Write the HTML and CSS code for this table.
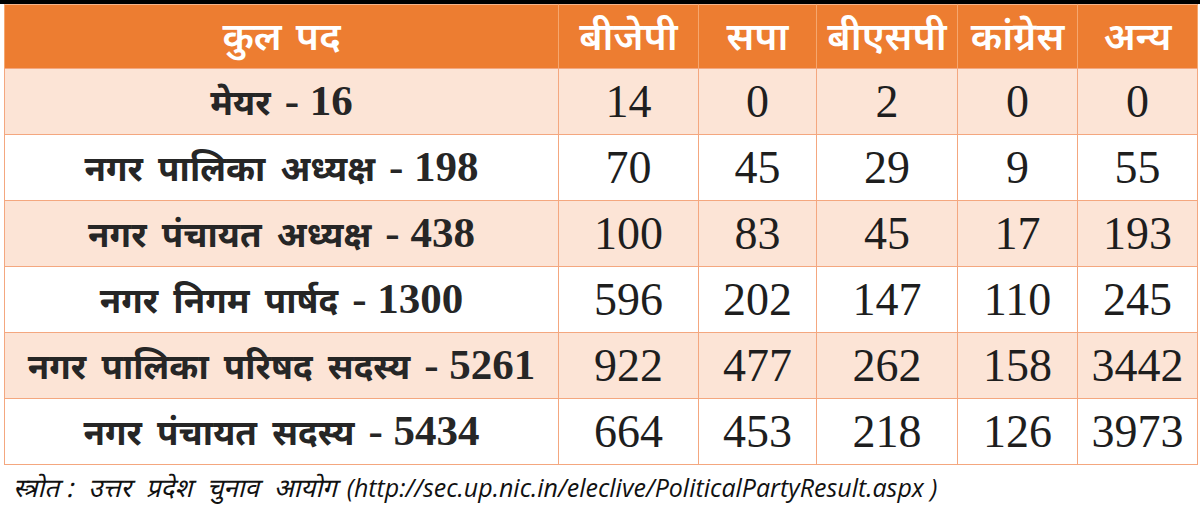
FILE: index.html
```html
<!DOCTYPE html>
<html lang="hi">
<head>
<meta charset="utf-8">
<link rel="stylesheet" href="styles.css">
</head>
<body>
<div class="topbar"></div>
<table class="results">
  <colgroup>
    <col class="c-post"><col class="c-n"><col class="c-s"><col class="c-b"><col class="c-k"><col class="c-a">
  </colgroup>
  <thead>
    <tr>
      <th>कुल पद</th><th>बीजेपी</th><th>सपा</th><th>बीएसपी</th><th>कांग्रेस</th><th>अन्य</th>
    </tr>
  </thead>
  <tbody>
    <tr class="tint"><td class="post"><span class="hi">मेयर</span> <span class="num">- 16</span></td><td>14</td><td>0</td><td>2</td><td>0</td><td>0</td></tr>
    <tr><td class="post"><span class="hi">नगर पालिका अध्यक्ष</span> <span class="num">- 198</span></td><td>70</td><td>45</td><td>29</td><td>9</td><td>55</td></tr>
    <tr class="tint"><td class="post"><span class="hi">नगर पंचायत अध्यक्ष</span> <span class="num">- 438</span></td><td>100</td><td>83</td><td>45</td><td>17</td><td>193</td></tr>
    <tr><td class="post"><span class="hi">नगर निगम पार्षद</span> <span class="num">- 1300</span></td><td>596</td><td>202</td><td>147</td><td>110</td><td>245</td></tr>
    <tr class="tint"><td class="post"><span class="hi">नगर पालिका परिषद सदस्य</span> <span class="num">- 5261</span></td><td>922</td><td>477</td><td>262</td><td>158</td><td>3442</td></tr>
    <tr><td class="post"><span class="hi">नगर पंचायत सदस्य</span> <span class="num">- 5434</span></td><td>664</td><td>453</td><td>218</td><td>126</td><td>3973</td></tr>
  </tbody>
</table>
<p class="source"><span class="src-hi"><span class="src-label">स्त्रोत :</span> उत्तर प्रदेश चुनाव आयोग</span> <span class="url">(http://sec.up.nic.in/eleclive/PoliticalPartyResult.aspx )</span></p>
</body>
</html>
```

FILE: styles.css
```css
html, body {
  margin: 0;
  padding: 0;
  background: #ffffff;
}
.topbar {
  height: 4px;
  background: #000000;
}
.results {
  margin-left: 4px;
  width: 1193px;
  border-collapse: collapse;
  table-layout: fixed;
  border: 1px solid #f4a77f;
}
.c-post { width: 554px; }
.c-n { width: 140px; }
.c-s { width: 118px; }
.c-b { width: 141px; }
.c-k { width: 120px; }
.c-a { width: 120px; }
.results th {
  height: 64px;
  padding: 8px 0 0;
  box-sizing: border-box;
  background: #ed7d31;
  color: #ffffff;
  font-family: "Noto Sans Devanagari", "Noto Sans", sans-serif;
  font-weight: 600;
  font-size: 39px;
  text-align: center;
  vertical-align: middle;
  border-left: 1px solid #f6a76e;
  border-right: 1px solid #f6a76e;
  border-top: 1px solid #f6b48a;
  border-bottom: 1px solid #f4a77f;
  line-height: 1;
  word-spacing: 4px;
}
.results td {
  height: 65px;
  padding: 0;
  text-align: center;
  vertical-align: middle;
  border: 1px solid #f4a77f;
  font-family: "Liberation Serif", "Times New Roman", serif;
  font-size: 46px;
  color: #1e1e1e;
  line-height: 1;
}
.results tr.tint td {
  background: #fce4d6;
}
.results td.post {
  color: #262626;
  font-weight: 700;
  font-size: 40px;
}
.post .hi {
  font-family: "Noto Sans Devanagari", "Noto Sans", sans-serif;
  font-size: 35px;
  font-weight: 700;
  word-spacing: 6px;
}
.post .num {
  font-family: "Liberation Serif", "Times New Roman", serif;
  font-size: 43px;
  font-weight: 700;
  margin-left: 4px;
}
.source {
  margin: 6px 0 0 13px;
  font-style: italic;
  color: #111111;
  line-height: 1.3;
}
.src-hi {
  font-family: "Noto Sans Devanagari", "Open Sans", sans-serif;
  font-size: 26px;
  word-spacing: 8px;
}
.src-label {
  word-spacing: 0;
}
.url {
  font-family: "Open Sans", sans-serif;
  font-size: 25px;
  margin-left: 6px;
}
```
